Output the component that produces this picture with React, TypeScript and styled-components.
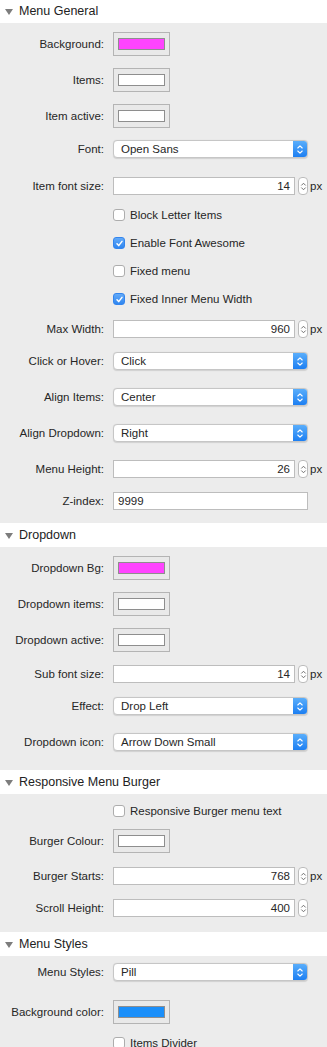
import React from "react";
import styled, { createGlobalStyle } from "styled-components";

const GlobalStyle = createGlobalStyle`
  html, body { margin: 0; padding: 0; }
  body {
    background: #ececec;
    font-family: "Liberation Sans", Arial, sans-serif;
    color: #262626;
    -webkit-font-smoothing: antialiased;
  }
`;

const Panel = styled.div`
  width: 327px;
  height: 1047px;
  overflow: hidden;
  background: #ececec;
  display: flex;
  flex-direction: column;
`;

const Header = styled.div<{ $mt: number }>`
  height: 24px;
  margin-top: ${(p) => p.$mt}px;
  background: #ffffff;
  display: flex;
  align-items: center;
  padding-left: 5px;
  gap: 6px;
  flex-shrink: 0;
`;

const Triangle = styled.span`
  width: 0;
  height: 0;
  border-left: 4px solid transparent;
  border-right: 4px solid transparent;
  border-top: 6px solid #7d7d7d;
  margin-top: 1px;
`;

const HeaderTitle = styled.span`
  font-size: 12.5px;
  color: #222;
`;

const Row = styled.div<{ $h: number; $mt: number }>`
  display: grid;
  grid-template-columns: 113px 195px 19px;
  align-items: center;
  height: ${(p) => p.$h}px;
  margin-top: ${(p) => p.$mt}px;
  flex-shrink: 0;
`;

const Label = styled.div`
  text-align: right;
  padding-right: 9px;
  font-size: 11.5px;
  white-space: nowrap;
`;

const SwatchBox = styled.div`
  width: 57px;
  height: 24px;
  box-sizing: border-box;
  border: 1px solid #b4b4b4;
  background: #e9e9e9;
  display: flex;
  align-items: center;
  justify-content: center;
`;

const SwatchFill = styled.div<{ $c: string }>`
  width: 47px;
  height: 12px;
  box-sizing: border-box;
  border: 1px solid #8e8e8e;
  background: ${(p) => p.$c};
`;

const SelectBox = styled.div`
  height: 18px;
  box-sizing: border-box;
  border: 1px solid #c6c6c6;
  border-radius: 4px;
  background: #fff;
  display: flex;
  align-items: stretch;
  overflow: hidden;
  box-shadow: 0 0.5px 1px rgba(0, 0, 0, 0.12);
`;

const SelectText = styled.div`
  flex: 1;
  display: flex;
  align-items: center;
  padding-left: 7px;
  font-size: 11.5px;
`;

const SelectButton = styled.div`
  width: 14px;
  background: linear-gradient(#5aaefb, #1d7ff2);
  display: flex;
  align-items: center;
  justify-content: center;
`;

const NumberGroup = styled.div`
  display: flex;
  align-items: center;
  gap: 3px;
`;

const Field = styled.div<{ $align: "left" | "right" }>`
  flex: 1;
  height: 18px;
  box-sizing: border-box;
  border: 1px solid #bdbdbd;
  background: #fff;
  display: flex;
  align-items: center;
  justify-content: ${(p) => (p.$align === "right" ? "flex-end" : "flex-start")};
  padding: 0 4px 0 4px;
  font-size: 11.5px;
`;

const Stepper = styled.div`
  width: 10px;
  height: 18px;
  box-sizing: border-box;
  border: 1px solid #bcbcbc;
  border-radius: 4px;
  background: #fff;
  display: flex;
  align-items: center;
  justify-content: center;
`;

const Unit = styled.div`
  font-size: 11.5px;
  padding-left: 2px;
`;

const CheckWrap = styled.label`
  display: flex;
  align-items: center;
  gap: 5px;
  font-size: 11.5px;
  white-space: nowrap;
`;

const Box = styled.span<{ $on: boolean }>`
  width: 12px;
  height: 12px;
  box-sizing: border-box;
  border-radius: 3px;
  border: 1px solid ${(p) => (p.$on ? "#3385ee" : "#adadad")};
  background: ${(p) => (p.$on ? "linear-gradient(#63aaf8, #2f86f0)" : "#fff")};
  display: flex;
  align-items: center;
  justify-content: center;
`;

const UpDown = ({ color, w }: { color: string; w: number }) => (
  <svg width={w} height="11" viewBox="0 0 8 11">
    <path d="M1.8 4 L4 1.8 L6.2 4" fill="none" stroke={color} strokeWidth="1.1" strokeLinecap="round" strokeLinejoin="round" />
    <path d="M1.8 7 L4 9.2 L6.2 7" fill="none" stroke={color} strokeWidth="1.1" strokeLinecap="round" strokeLinejoin="round" />
  </svg>
);

const Tick = () => (
  <svg width="9" height="9" viewBox="0 0 9 9">
    <path d="M2 4.8 L3.7 6.6 L7 2.4" fill="none" stroke="#fff" strokeWidth="1.5" strokeLinecap="round" strokeLinejoin="round" />
  </svg>
);

type Item =
  | { kind: "swatch"; label: string; color: string; mt: number }
  | { kind: "select"; label: string; value: string; mt: number }
  | { kind: "number"; label: string; value: string; unit?: string; mt: number }
  | { kind: "text"; label: string; value: string; mt: number }
  | { kind: "check"; text: string; on: boolean; mt: number };

type Section = { title: string; mt: number; items: Item[] };

const sections: Section[] = [
  {
    title: "Menu General",
    mt: -1,
    items: [
      { kind: "swatch", label: "Background:", color: "#ff44ff", mt: 9 },
      { kind: "swatch", label: "Items:", color: "#ffffff", mt: 12 },
      { kind: "swatch", label: "Item active:", color: "#ffffff", mt: 12 },
      { kind: "select", label: "Font:", value: "Open Sans", mt: 12 },
      { kind: "number", label: "Item font size:", value: "14", unit: "px", mt: 19 },
      { kind: "check", text: "Block Letter Items", on: false, mt: 13 },
      { kind: "check", text: "Enable Font Awesome", on: true, mt: 14 },
      { kind: "check", text: "Fixed menu", on: false, mt: 14 },
      { kind: "check", text: "Fixed Inner Menu Width", on: true, mt: 14 },
      { kind: "number", label: "Max Width:", value: "960", unit: "px", mt: 14 },
      { kind: "select", label: "Click or Hover:", value: "Click", mt: 14 },
      { kind: "select", label: "Align Items:", value: "Center", mt: 18 },
      { kind: "select", label: "Align Dropdown:", value: "Right", mt: 18 },
      { kind: "number", label: "Menu Height:", value: "26", unit: "px", mt: 18 },
      { kind: "text", label: "Z-index:", value: "9999", mt: 14 },
    ],
  },
  {
    title: "Dropdown",
    mt: 13,
    items: [
      { kind: "swatch", label: "Dropdown Bg:", color: "#ff44ff", mt: 9 },
      { kind: "swatch", label: "Dropdown items:", color: "#ffffff", mt: 12 },
      { kind: "swatch", label: "Dropdown active:", color: "#ffffff", mt: 12 },
      { kind: "number", label: "Sub font size:", value: "14", unit: "px", mt: 13 },
      { kind: "select", label: "Effect:", value: "Drop Left", mt: 14 },
      { kind: "select", label: "Dropdown icon:", value: "Arrow Down Small", mt: 18 },
    ],
  },
  {
    title: "Responsive Menu Burger",
    mt: 19,
    items: [
      { kind: "check", text: "Responsive Burger menu text", on: false, mt: 10 },
      { kind: "swatch", label: "Burger Colour:", color: "#ffffff", mt: 11 },
      { kind: "number", label: "Burger Starts:", value: "768", unit: "px", mt: 14 },
      { kind: "number", label: "Scroll Height:", value: "400", mt: 14 },
    ],
  },
  {
    title: "Menu Styles",
    mt: 15,
    items: [
      { kind: "select", label: "Menu Styles:", value: "Pill", mt: 7 },
      { kind: "swatch", label: "Background color:", color: "#1a8ffa", mt: 19 },
      { kind: "check", text: "Items Divider", on: false, mt: 12 },
    ],
  },
];

const renderItem = (it: Item, i: number) => {
  switch (it.kind) {
    case "swatch":
      return (
        <Row key={i} $h={24} $mt={it.mt}>
          <Label>{it.label}</Label>
          <div>
            <SwatchBox>
              <SwatchFill $c={it.color} />
            </SwatchBox>
          </div>
        </Row>
      );
    case "select":
      return (
        <Row key={i} $h={18} $mt={it.mt}>
          <Label>{it.label}</Label>
          <SelectBox>
            <SelectText>{it.value}</SelectText>
            <SelectButton>
              <UpDown color="#fff" w={8} />
            </SelectButton>
          </SelectBox>
        </Row>
      );
    case "number":
      return (
        <Row key={i} $h={18} $mt={it.mt}>
          <Label>{it.label}</Label>
          <NumberGroup>
            <Field $align="right">{it.value}</Field>
            <Stepper>
              <UpDown color="#6a6a6a" w={7} />
            </Stepper>
          </NumberGroup>
          {it.unit ? <Unit>{it.unit}</Unit> : <span />}
        </Row>
      );
    case "text":
      return (
        <Row key={i} $h={18} $mt={it.mt}>
          <Label>{it.label}</Label>
          <Field $align="left">{it.value}</Field>
        </Row>
      );
    case "check":
      return (
        <Row key={i} $h={14} $mt={it.mt}>
          <span />
          <CheckWrap>
            <Box $on={it.on}>{it.on ? <Tick /> : null}</Box>
            {it.text}
          </CheckWrap>
        </Row>
      );
  }
};

export default function App() {
  return (
    <>
      <GlobalStyle />
      <Panel>
        {sections.map((s) => (
          <React.Fragment key={s.title}>
            <Header $mt={s.mt}>
              <Triangle />
              <HeaderTitle>{s.title}</HeaderTitle>
            </Header>
            {s.items.map(renderItem)}
          </React.Fragment>
        ))}
      </Panel>
    </>
  );
}
